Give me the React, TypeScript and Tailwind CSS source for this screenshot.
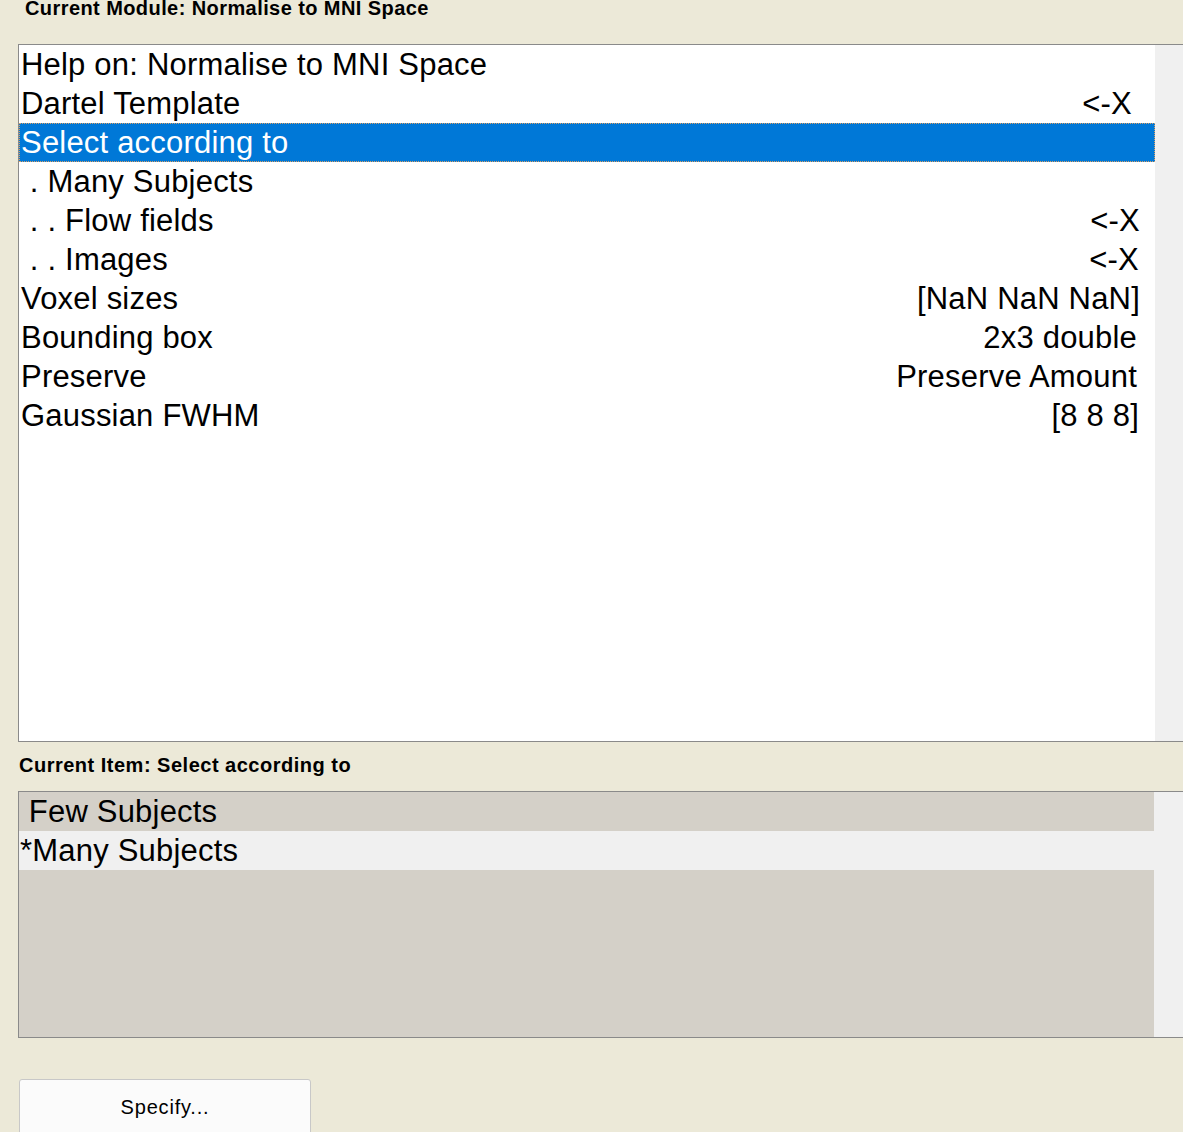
import React from "react";

const rows: { label: string; value?: string; pr?: number; selected?: boolean }[] = [
  { label: "Help on: Normalise to MNI Space" },
  { label: "Dartel Template", value: "<-X", pr: 23 },
  { label: "Select according to", selected: true },
  { label: " . Many Subjects" },
  { label: " . . Flow fields", value: "<-X", pr: 15 },
  { label: " . . Images", value: "<-X", pr: 16 },
  { label: "Voxel sizes", value: "[NaN NaN NaN]", pr: 15 },
  { label: "Bounding box", value: "2x3 double", pr: 18 },
  { label: "Preserve", value: "Preserve Amount", pr: 18 },
  { label: "Gaussian FWHM", value: "[8 8 8]", pr: 16 },
];

export default function App() {
  return (
    <div
      className="w-[1183px] h-[1132px] overflow-hidden bg-[#ECE9D8] text-black"
      style={{ fontFamily: '"Liberation Sans", Arial, sans-serif' }}
    >
      <div className="h-[44px] pl-[25px] text-[20px] font-bold leading-[17px] tracking-[0.42px]">
        Current Module: Normalise to MNI Space
      </div>
      <div className="ml-[18px] w-[1180px] h-[698px] border border-[#8a8a8a] flex">
        <div className="w-[1136px] bg-white flex flex-col">
          {rows.map((r, i) => (
            <div
              key={i}
              className={
                r.selected
                  ? "h-[39px] flex items-center justify-between bg-[#0078D7] text-white border border-dotted border-[#d9a066] pl-[1px] text-[31px] tracking-[0.2px] leading-[39px] whitespace-pre"
                  : "h-[39px] flex items-center justify-between pl-[2px] text-[31px] tracking-[0.2px] leading-[39px] whitespace-pre"
              }
            >
              <span>{r.label}</span>
              {r.value && <span style={{ paddingRight: r.pr }}>{r.value}</span>}
            </div>
          ))}
        </div>
        <div className="flex-1 bg-[#F0F0F0]" />
      </div>
      <div className="h-[49px] pl-[19px] pt-[12px] text-[20px] font-bold leading-[22px] tracking-[0.5px]">
        Current Item: Select according to
      </div>
      <div className="ml-[18px] w-[1180px] h-[247px] border border-[#8a8a8a] flex">
        <div className="w-[1135px] bg-[#D4D0C8] flex flex-col">
          <div className="h-[39px] pl-[1px] text-[31px] tracking-[0.2px] leading-[39px] whitespace-pre">{" Few Subjects"}</div>
          <div className="h-[39px] pl-[1px] bg-[#F0F0F0] text-[31px] tracking-[0.2px] leading-[39px] whitespace-pre">*Many Subjects</div>
        </div>
        <div className="flex-1 bg-[#F0F0F0]" />
      </div>
      <div className="pt-[41px] pl-[19px]">
        <div className="w-[292px] h-[80px] rounded-[3px] border border-[#C8C8C8] bg-[#FBFBFB] pt-[15px] text-center text-[20px] tracking-[0.8px] leading-[24px]">
          Specify...
        </div>
      </div>
    </div>
  );
}
